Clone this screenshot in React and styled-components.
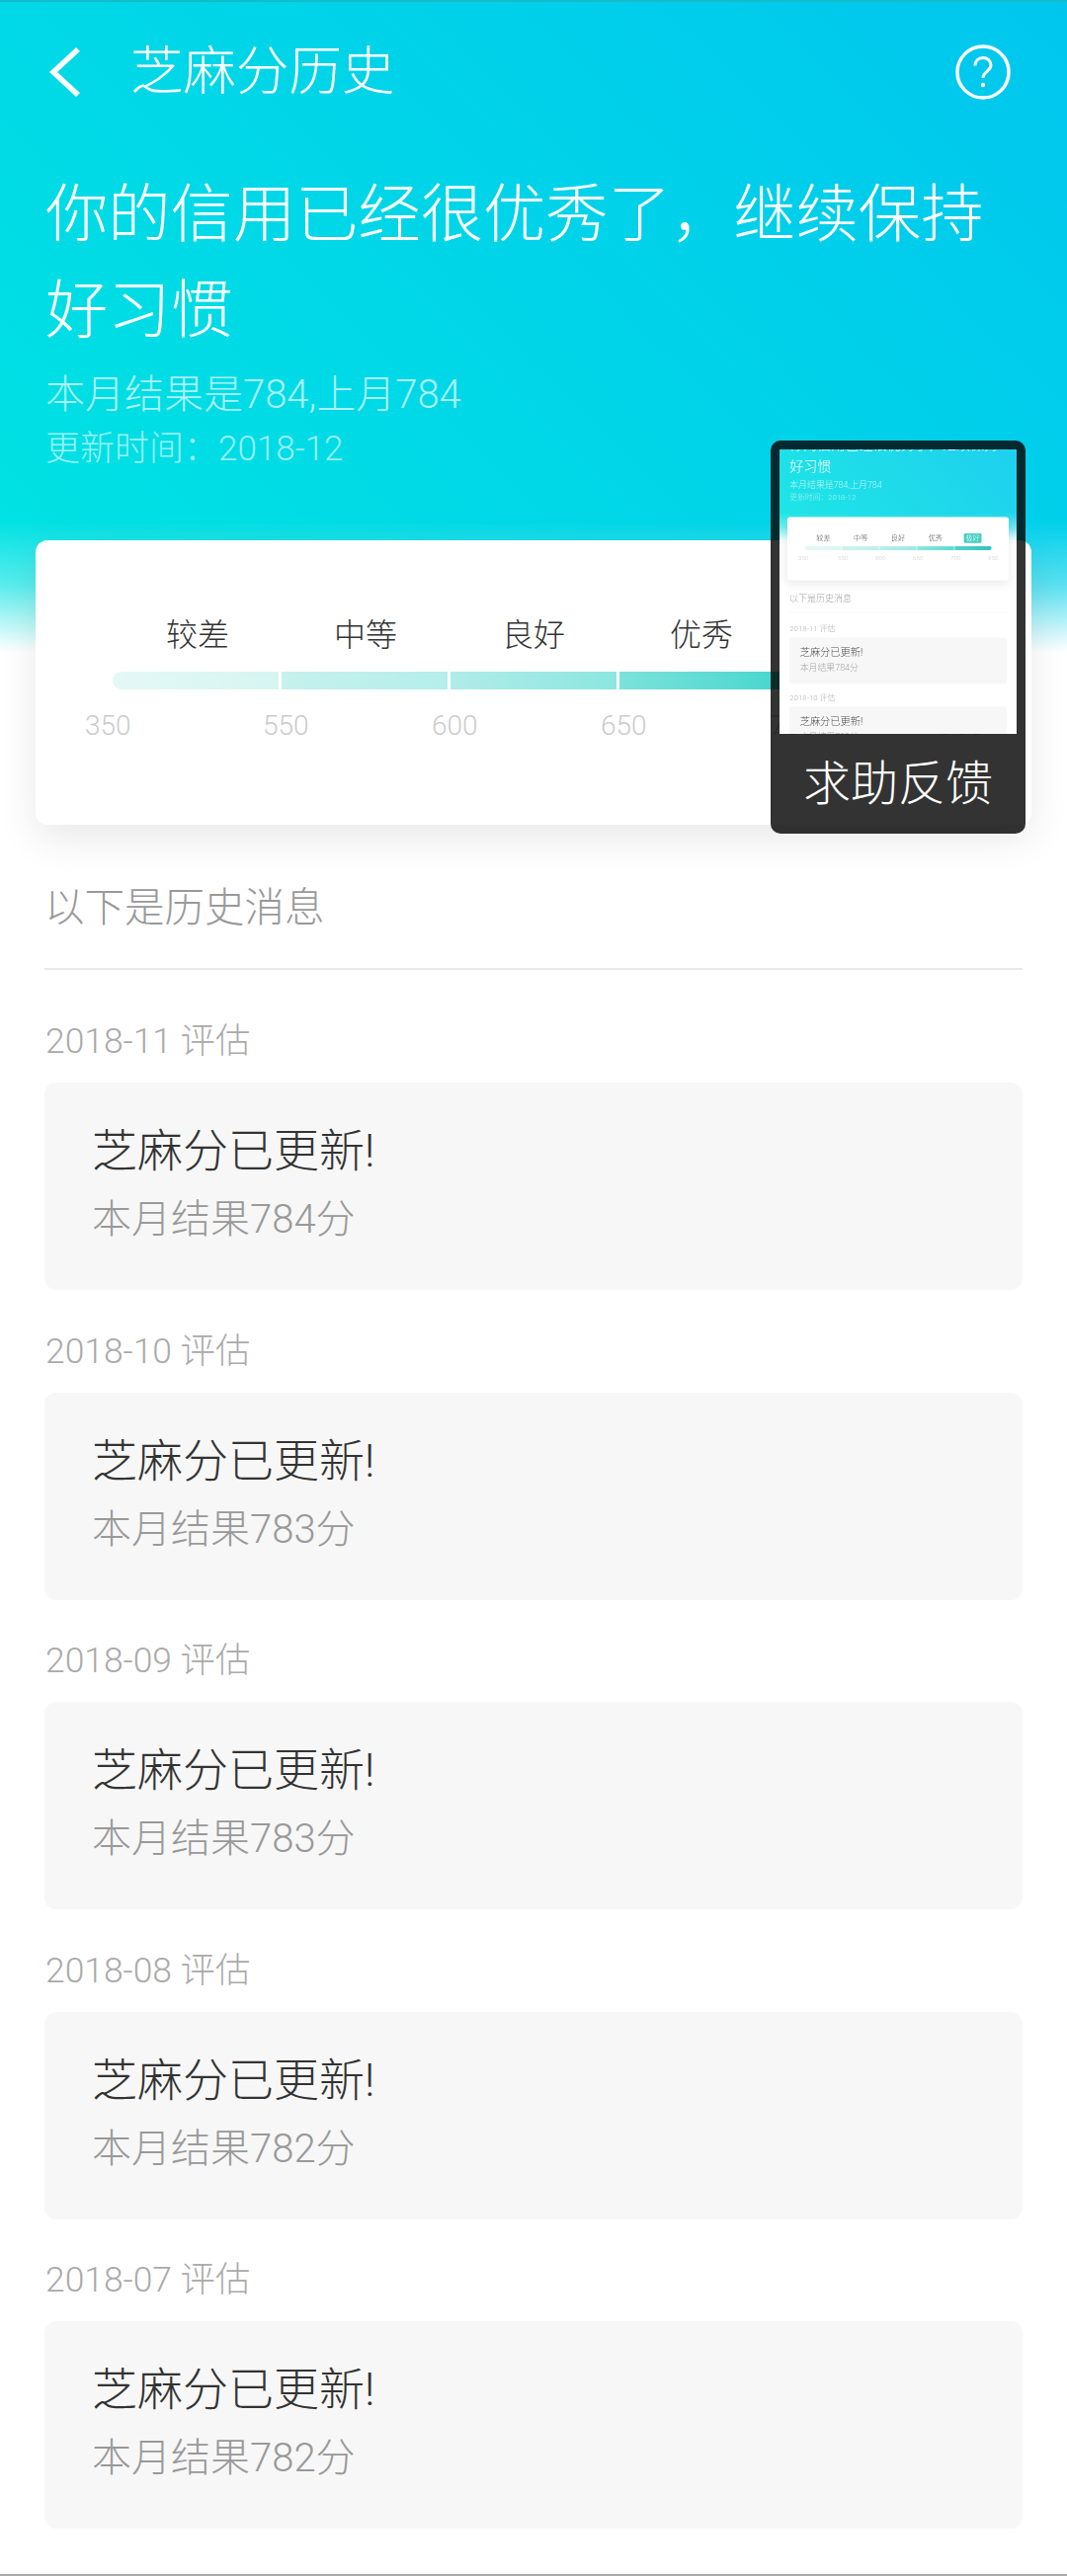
import React from "react";
import styled, { createGlobalStyle } from "styled-components";

const History = [
  { month: "2018-11", score: 784 },
  { month: "2018-10", score: 783 },
  { month: "2018-09", score: 783 },
  { month: "2018-08", score: 782 },
  { month: "2018-07", score: 782 },
];

const Levels = ["较差", "中等", "良好", "优秀", "极好"];
const Ticks = [350, 550, 600, 650, 700, 950];
const Bars = [
  "linear-gradient(90deg, #e4f8f6, #d6f5f2)",
  "linear-gradient(90deg, #c6f1ed, #b4eeea)",
  "linear-gradient(90deg, #b0ece8, #8ce6e0)",
  "linear-gradient(90deg, #7ce2da, #46d6cd)",
  "linear-gradient(90deg, #38cfc3, #19bdb0)",
];

const Content = ({ entries }) => (
  <>
    <Hero>
      <Nav>
        <NavLeft>
          <svg width="36" height="50" viewBox="0 0 36 50" fill="none">
            <path d="M31 2 L6 25 L31 48" stroke="#fff" strokeWidth="5.500" />
          </svg>
          <NavTitle>芝麻分历史</NavTitle>
        </NavLeft>
        <svg width="56" height="56" viewBox="0 0 56 56" fill="none">
          <circle cx="28" cy="28" r="26" stroke="#fff" strokeWidth="3.500" />
          <path
            d="M20 21.500c0-5 3.500-8 8-8s8 3 8 7.500c0 6-8 6.500-8 13"
            stroke="#fff"
            strokeWidth="3"
          />
          <circle cx="28" cy="41" r="2.200" fill="#fff" />
        </svg>
      </Nav>
      <Headline>你的信用已经很优秀了，继续保持好习惯</Headline>
      <Result>本月结果是784,上月784</Result>
      <Updated>更新时间：2018-12</Updated>
      <ScoreCard>
        <LevelRow>
          {Levels.map((name, i) => (
            <Level key={name}>
              <LevelName $active={i === 4}>{name}</LevelName>
            </Level>
          ))}
        </LevelRow>
        <BarRow>
          {Bars.map((bar) => (
            <BarPart key={bar} $fill={bar} />
          ))}
        </BarRow>
        <TickRow>
          {Ticks.map((tick) => (
            <Tick key={tick}>{tick}</Tick>
          ))}
        </TickRow>
      </ScoreCard>
    </Hero>
    <Body>
      <SectionTitle>以下是历史消息</SectionTitle>
      {entries.map((item) => (
        <Entry key={item.month}>
          <EntryDate>{item.month} 评估</EntryDate>
          <EntryCard>
            <EntryTitle>芝麻分已更新!</EntryTitle>
            <EntryText>本月结果{item.score}分</EntryText>
          </EntryCard>
        </Entry>
      ))}
    </Body>
  </>
);

export default function App() {
  return (
    <Page>
      <GlobalStyle />
      <Content entries={History} />
      <Feedback>
        <Preview>
          <PreviewPage aria-hidden="true">
            <Content entries={History.slice(0, 2)} />
          </PreviewPage>
        </Preview>
        <FeedbackLabel>求助反馈</FeedbackLabel>
      </Feedback>
    </Page>
  );
}

const GlobalStyle = createGlobalStyle`
  html, body {
    margin: 0;
    padding: 0;
    background: #fff;
  }
  * {
    box-sizing: border-box;
  }
`;

const Page = styled.div`
  position: relative;
  width: 1080px;
  height: 2608px;
  overflow: hidden;
  background: #fff;
  border-bottom: 2px solid #aaa;
  font-family: Roboto, "Noto Sans CJK SC", sans-serif;
  font-weight: 300;
`;

const Hero = styled.div`
  padding: 0 36px;
  height: 880px;
  border-top: 2px solid #14bccb;
  background:
    linear-gradient(180deg, rgba(255, 255, 255, 0) 525px, rgba(255, 255, 255, 0.35) 590px, #fff 658px) no-repeat,
    linear-gradient(225deg, #00c6ee 0%, #00e4e2 100%) no-repeat;
  background-size: 100% 660px;
`;

const Nav = styled.div`
  height: 142px;
  padding: 0 21px 0 12px;
  display: flex;
  align-items: center;
  justify-content: space-between;
`;

const NavLeft = styled.div`
  display: flex;
  align-items: center;
  gap: 48px;
`;

const NavTitle = styled.div`
  font-size: 53.500px;
  color: #fff;
  line-height: 60px;
`;

const Headline = styled.div`
  margin-top: 25px;
  padding: 0 10px;
  font-size: 63.300px;
  line-height: 96.500px;
  color: #fff;
`;

const Result = styled.div`
  margin-top: 13px;
  padding: 0 10px;
  font-size: 40px;
  line-height: 50px;
  color: rgba(255, 255, 255, 0.68);
`;

const Updated = styled.div`
  margin-top: 7px;
  padding: 0 10px;
  font-size: 35px;
  line-height: 46px;
  color: rgba(255, 255, 255, 0.6);
`;

const ScoreCard = styled.div`
  margin-top: 69px;
  width: 1008px;
  height: 288px;
  padding: 74px 0 0;
  background: #fff;
  border-radius: 12px;
  box-shadow: 0 14px 40px rgba(0, 0, 0, 0.09);
`;

const LevelRow = styled.div`
  display: flex;
  padding-left: 79px;
`;

const Level = styled.div`
  flex: none;
  width: 170px;
  text-align: center;
  font-size: 32px;
  line-height: 44px;
  color: #333;
`;

const LevelName = styled.span`
  display: inline-block;
  padding: 0 8px;
  border-radius: 6px;
  color: ${(props) => (props.$active ? "#fff" : "inherit")};
  background: ${(props) => (props.$active ? "#2cc8bc" : "transparent")};
`;

const BarRow = styled.div`
  margin-top: 15px;
  padding-left: 78px;
  display: flex;
  gap: 3px;
`;

const BarPart = styled.div`
  flex: none;
  width: 168px;
  height: 18px;
  background: ${(props) => props.$fill};
  &:first-child {
    border-radius: 9px 0 0 9px;
  }
  &:last-child {
    border-radius: 0 9px 9px 0;
  }
`;

const TickRow = styled.div`
  margin-top: 17px;
  padding-left: 50px;
  display: flex;
  font-size: 28px;
  line-height: 40px;
  color: #ccc;
`;

const Tick = styled.div`
  flex: none;
  width: 171px;
  &:first-child {
    width: 180px;
  }
  &:last-child {
    width: 44px;
  }
`;

const Body = styled.div`
  padding: 0 45px;
`;

const SectionTitle = styled.div`
  height: 102px;
  margin-bottom: 49px;
  line-height: 78px;
  font-size: 40.500px;
  color: #999;
  border-bottom: 2px solid #e8e8e8;
`;

const Entry = styled.div`
  margin-bottom: 38.600px;
`;

const EntryDate = styled.div`
  padding: 0 1px;
  height: 50px;
  margin-bottom: 15px;
  font-size: 35.400px;
  line-height: 46px;
  color: #aaa;
`;

const EntryCard = styled.div`
  height: 210px;
  padding: 39px 48px 0;
  background: #f7f7f7;
  border-radius: 12px;
`;

const EntryTitle = styled.div`
  font-size: 46px;
  line-height: 60px;
  color: #333;
`;

const EntryText = styled.div`
  margin-top: 10px;
  font-size: 40px;
  line-height: 60px;
  color: #999;
`;

const Feedback = styled.div`
  position: absolute;
  left: 780px;
  top: 446px;
  width: 258px;
  height: 398px;
  padding: 9px 9px 0;
  border-radius: 10px;
  background: rgba(0, 0, 0, 0.8);
`;

const Preview = styled.div`
  position: relative;
  width: 240px;
  height: 288px;
  overflow: hidden;
  background: #fff;
`;

const PreviewPage = styled.div`
  position: absolute;
  left: 0;
  top: -53px;
  width: 1080px;
  height: 1600px;
  background: #fff;
  transform: scale(0.2222);
  transform-origin: 0 0;
  filter: blur(3.500px);
  opacity: 0.88;
`;

const FeedbackLabel = styled.div`
  height: 101px;
  text-align: center;
  font-size: 48px;
  line-height: 102px;
  color: #fff;
`;
